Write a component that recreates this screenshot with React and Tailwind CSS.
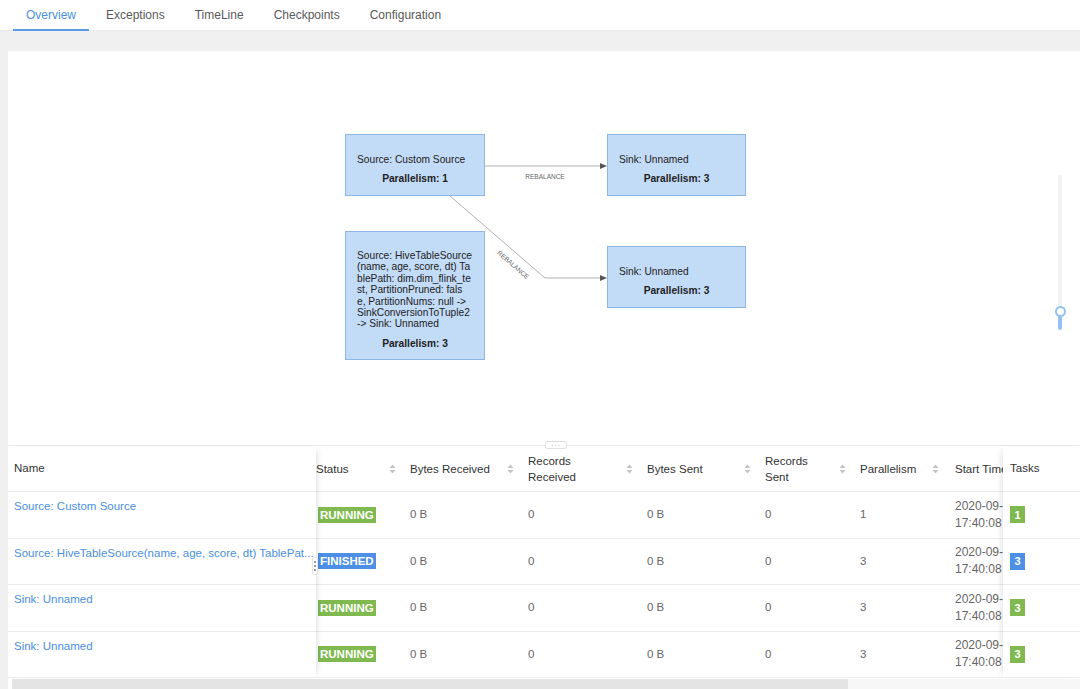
import React from 'react';

const tabs = ['Overview', 'Exceptions', 'TimeLine', 'Checkpoints', 'Configuration'];

// middle (scrolling) columns: width and header title
const cols = [
  { key: 'status', title: 'Status', w: 'w-[87px]', pl: 'pl-0' },
  { key: 'bytesIn', title: 'Bytes Received', w: 'w-[118px]', pl: 'pl-[7px]' },
  { key: 'recIn', title: ['Records', 'Received'], w: 'w-[119px]', pl: 'pl-[7px]' },
  { key: 'bytesOut', title: 'Bytes Sent', w: 'w-[118px]', pl: 'pl-[7px]' },
  { key: 'recOut', title: ['Records', 'Sent'], w: 'w-[95px]', pl: 'pl-[7px]' },
  { key: 'par', title: 'Parallelism', w: 'w-[93px]', pl: 'pl-[7px]' },
  { key: 'start', title: 'Start Time', w: 'w-[120px]', pl: 'pl-[9px]', noSort: true },
];

const rows = [
  { name: 'Source: Custom Source', status: 'RUNNING', par: 1 },
  { name: 'Source: HiveTableSource(name, age, score, dt) TablePat...', status: 'FINISHED', par: 3 },
  { name: 'Sink: Unnamed', status: 'RUNNING', par: 3 },
  { name: 'Sink: Unnamed', status: 'RUNNING', par: 3 },
];

// the long operator name, wrapped as the graph renders it
const hiveLines = [
  'Source: HiveTableSource',
  '(name, age, score, dt) Ta',
  'blePath: dim.dim_flink_te',
  'st, PartitionPruned: fals',
  'e, PartitionNums: null ->',
  'SinkConversionToTuple2',
  '-> Sink: Unnamed',
];

const Sorter = () => (
  <svg width="7" height="10" viewBox="0 0 7 10" className="shrink-0">
    <polygon points="3.5,0.5 6.5,4 0.5,4" fill="#c4c4c4" />
    <polygon points="0.5,6 6.5,6 3.5,9.5" fill="#c4c4c4" />
  </svg>
);

const Tag = ({ status }) => (
  <span
    className={`inline-block h-[16px] px-[2px] text-[11.5px] font-bold leading-[16px] text-white ${
      status === 'RUNNING' ? 'bg-[#80b94f]' : 'bg-[#4d8fe6]'
    }`}
  >
    {status}
  </span>
);

const Node = ({ className, children, par }) => (
  <div
    className={`absolute flex flex-col justify-center border border-[#8fb7e6] bg-[#c2dbf6] px-[11px] pt-[8px] text-[10.2px] leading-[11.4px] text-[#222] ${className}`}
  >
    <div className="whitespace-nowrap">{children}</div>
    <div className="mt-[8px] text-center font-bold">Parallelism: {par}</div>
  </div>
);

function Graph() {
  return (
    <div className="relative h-[394px] shrink-0">
      <svg className="absolute inset-0" width="1072" height="394">
        <line x1="477" y1="115" x2="593" y2="115" stroke="#a8a8a8" strokeWidth="0.9" />
        <polygon points="592,112 599,115 592,118" fill="#555" />
        <polyline points="442,145 537,227 593,227" fill="none" stroke="#a8a8a8" strokeWidth="0.9" />
        <polygon points="592,224 599,227 592,230" fill="#555" />
        <text x="537" y="128" fontSize="6.5" fill="#666" textAnchor="middle" fontFamily="Liberation Sans, Arial, sans-serif">
          REBALANCE
        </text>
        <text
          x="505"
          y="216"
          fontSize="6.5"
          fill="#666"
          textAnchor="middle"
          transform="rotate(41 505 214)"
          fontFamily="Liberation Sans, Arial, sans-serif"
        >
          REBALANCE
        </text>
      </svg>

      <Node className="left-[337px] top-[83px] h-[62px] w-[140px]" par={1}>Source: Custom Source</Node>
      <Node className="left-[599px] top-[83px] h-[62px] w-[139px]" par={3}>Sink: Unnamed</Node>
      <Node className="left-[337px] top-[180px] h-[129px] w-[140px]" par={3}>
        {hiveLines.map((l) => (
          <div key={l}>{l}</div>
        ))}
      </Node>
      <Node className="left-[599px] top-[195px] h-[62px] w-[139px]" par={3}>Sink: Unnamed</Node>

      {/* zoom slider */}
      <div className="absolute left-[1050px] top-[124px] h-[132px] w-[4px] rounded-full bg-[#f2f2f2]" />
      <div className="absolute left-[1050px] top-[264px] h-[15px] w-[4px] rounded-b-full bg-[#91c2f2]" />
      <div className="absolute left-[1047px] top-[255px] h-[11px] w-[11px] rounded-full border-2 border-[#91c2f2] bg-white" />
    </div>
  );
}

function Divider() {
  return (
    <div className="relative h-px shrink-0 bg-[#e8e8e8]">
      <div className="absolute left-[537px] top-[-4px] flex h-[8px] w-[22px] items-center justify-center rounded-[2px] border border-[#e2e2e2] bg-white text-[7px] leading-none tracking-[1px] text-[#999]">
        ···
      </div>
    </div>
  );
}

function Table() {
  return (
    <div className="relative flex flex-col">
      <div className="flex">
        {/* fixed Name column */}
        <div className="z-10 w-[308px] shrink-0 bg-white shadow-[5px_0_6px_-4px_rgba(0,0,0,0.13)]">
          <div className="flex h-[46px] items-center border-b border-[#ececec] pl-[6px] pt-[1px] text-[11.5px] text-[#333]">Name</div>
          {rows.map((r, i) => (
            <div key={i} className="h-[46.5px] border-b border-[#ececec] pl-[6px] pt-[7px] text-[11.5px] leading-[14px] text-[#4a8fe0]">
              {r.name}
            </div>
          ))}
        </div>

        {/* scrolling middle */}
        <div className="w-[687px] shrink-0 overflow-hidden">
          <div className="w-[800px]">
            <div className="flex h-[46px] border-b border-[#ececec] text-[11.5px] leading-[16px] text-[#333]">
              {cols.map((c) => (
                <div key={c.key} className={`flex shrink-0 items-center justify-between pr-[7px] ${c.w} ${c.pl}`}>
                  <div className="whitespace-nowrap">
                    {Array.isArray(c.title) ? c.title.map((t) => <div key={t}>{t}</div>) : c.title}
                  </div>
                  {!c.noSort && <Sorter />}
                </div>
              ))}
            </div>
            {rows.map((r, i) => (
              <div key={i} className="flex h-[46.5px] border-b border-[#ececec] text-[11.5px] text-[#666]">
                <div className="flex w-[87px] shrink-0 items-center pl-[2px]">
                  <Tag status={r.status} />
                </div>
                <div className="flex w-[118px] shrink-0 items-center pl-[7px]">0 B</div>
                <div className="flex w-[119px] shrink-0 items-center pl-[7px]">0</div>
                <div className="flex w-[118px] shrink-0 items-center pl-[7px]">0 B</div>
                <div className="flex w-[95px] shrink-0 items-center pl-[7px]">0</div>
                <div className="flex w-[93px] shrink-0 items-center pl-[7px]">{r.par}</div>
                <div className="flex w-[120px] shrink-0 flex-col justify-center pl-[9px] text-[12px] leading-[17px]">
                  <div>2020-09-16</div>
                  <div>17:40:08</div>
                </div>
              </div>
            ))}
          </div>
        </div>

        {/* fixed Tasks column */}
        <div className="z-10 flex-1 bg-white shadow-[-5px_0_6px_-4px_rgba(0,0,0,0.13)]">
          <div className="flex h-[46px] items-center border-b border-[#ececec] pl-[7px] pt-[1px] text-[11.5px] text-[#333]">Tasks</div>
          {rows.map((r, i) => (
            <div key={i} className="flex h-[46.5px] items-center border-b border-[#ececec] pl-[7px]">
              <span
                className={`flex h-[17px] w-[15px] items-center justify-center text-[11px] font-bold text-white ${
                  r.status === 'RUNNING' ? 'bg-[#80b94f]' : 'bg-[#4d8fe6]'
                }`}
              >
                {r.par}
              </span>
            </div>
          ))}
        </div>
      </div>

      {/* column resize handle */}
      <div className="absolute left-[304px] top-[111px] z-20 flex h-[18px] w-[6px] flex-col items-center justify-center gap-[2px] rounded-[2px] border border-[#e4e4e4] bg-white">
        <span className="h-[2px] w-[2px] rounded-full bg-[#777]" />
        <span className="h-[2px] w-[2px] rounded-full bg-[#777]" />
        <span className="h-[2px] w-[2px] rounded-full bg-[#777]" />
      </div>

      {/* horizontal scrollbar */}
      <div className="ml-[4px] mt-[0.5px] flex h-[11px] bg-[#f7f7f7]">
        <div className="h-full w-[836px] bg-[#e4e4e4]" />
      </div>
    </div>
  );
}

export default function App() {
  return (
    <div className="h-[689px] w-[1080px] overflow-hidden bg-[#f0f0f0] font-['Liberation_Sans',Arial,sans-serif]">
      <div className="flex h-[31px] gap-[4px] border-b border-[#e8e8e8] bg-white pl-[13px]">
        {tabs.map((t, i) => (
          <div
            key={t}
            className={`flex h-[31px] items-center border-b-2 px-[13px] pt-[1px] text-[12px] ${
              i === 0 ? 'border-[#5a9be8] text-[#4a8fe0]' : 'border-transparent text-[#595959]'
            }`}
          >
            {t}
          </div>
        ))}
      </div>

      <div className="ml-[8px] mt-[20px] flex h-[638px] flex-col bg-white">
        <Graph />
        <Divider />
        <Table />
      </div>
    </div>
  );
}
